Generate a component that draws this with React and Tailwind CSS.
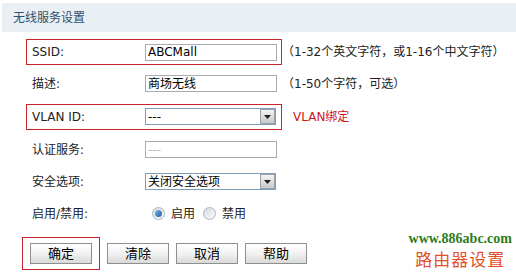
const font = { fontFamily: '"DejaVu Sans", "Noto Sans CJK SC", sans-serif' };

const Field = ({ label, boxed, children, hint, hintClass = "", height }) => (
  <div className={`flex items-center pl-[26px] ${height}`}>
    <div
      className={`flex items-center w-[256px] h-[26px] pl-[5px] border ${
        boxed ? "border-[#c8242b]" : "border-transparent"
      }`}
    >
      <span className="w-[113px] text-[12px] text-[#222]">{label}</span>
      {children}
    </div>
    {hint && <span className={`text-[12px] ${hintClass}`}>{hint}</span>}
  </div>
);

const TextBox = ({ value, disabled }) => (
  <div
    className={`w-[132px] h-[17px] border border-[#a5acb2] bg-white flex items-center pl-[2px] text-[12px] leading-none ${
      disabled ? "text-[#b8b8b8]" : "text-black"
    }`}
  >
    {value}
  </div>
);

const SelectBox = ({ value }) => (
  <div className="w-[131px] h-[17px] border border-[#7f9db9] bg-white flex items-center justify-between text-[12px] leading-none text-black">
    <span className="pl-[2px]">{value}</span>
    <span className="w-[15px] h-[15px] border border-[#9aa3ab] bg-gradient-to-b from-[#f4f4f4] to-[#c9c9c9] flex items-center justify-center">
      <svg width="7" height="4" viewBox="0 0 7 4">
        <path d="M0 0h7L3.5 4z" fill="#222" />
      </svg>
    </span>
  </div>
);

const Radio = ({ checked }) => (
  <span className="w-[13px] h-[13px] rounded-full border border-[#aab4bd] bg-gradient-to-br from-[#d8dde2] to-[#fafafa] flex items-center justify-center">
    {checked && (
      <span className="w-[7px] h-[7px] rounded-full bg-gradient-to-br from-[#7ab6e6] to-[#1a5c9c]" />
    )}
  </span>
);

const Btn = ({ children }) => (
  <button className="w-[62px] h-[21px] border border-[#8e8f8f] bg-gradient-to-b from-[#ffffff] via-[#f2f2f2] to-[#d9d9d9] text-[13px] text-black flex items-center justify-center">
    {children}
  </button>
);

export default function App() {
  return (
    <div className="w-[516px] h-[274px] bg-white relative overflow-hidden" style={font}>
      <div className="mt-[3px] ml-[2px] h-[29px] bg-[#e9eff3] flex items-center pl-[11px] text-[12px] text-[#2f4f6f]">
        无线服务设置
      </div>

      <div className="mt-[4px]">
        <Field label="SSID:" boxed height="h-[32px]" hint="（1-32个英文字符，或1-16个中文字符）" hintClass="text-[#222]">
          <TextBox value="ABCMall" />
        </Field>
        <Field label="描述:" height="h-[31px]" hint="（1-50个字符，可选）" hintClass="text-[#222]">
          <TextBox value="商场无线" />
        </Field>
        <Field label="VLAN ID:" boxed height="h-[35px]" hint="VLAN绑定" hintClass="text-[#d0141c] ml-[11px]">
          <SelectBox value="---" />
        </Field>
        <Field label="认证服务:" height="h-[31px]">
          <TextBox value="---" disabled />
        </Field>
        <Field label="安全选项:" height="h-[33px]">
          <SelectBox value="关闭安全选项" />
        </Field>
        <Field label="启用/禁用:" height="h-[31px]">
          <div className="flex items-center gap-[6px] text-[12px] text-[#222] pl-[7px]">
            <Radio checked />
            <span className="mr-[2px]">启用</span>
            <Radio />
            <span>禁用</span>
          </div>
        </Field>
      </div>

      <div className="flex items-center mt-[8px] pl-[22px] gap-[7px]">
        <div className="border border-[#c8242b] px-[7px] py-[5px]">
          <Btn>确定</Btn>
        </div>
        <Btn>清除</Btn>
        <Btn>取消</Btn>
        <Btn>帮助</Btn>
      </div>

      <div className="absolute right-[4px] top-[228px] flex flex-col items-center">
        <span
          className="text-[14px] font-bold text-[#2e7b1c]"
          style={{ fontFamily: '"Liberation Serif", serif' }}
        >
          www.886abc.com
        </span>
        <span
          className="text-[17px] text-[#e4502a] tracking-[1px] leading-[20px]"
          style={{ fontFamily: '"Noto Sans CJK SC", sans-serif' }}
        >
          路由器设置
        </span>
      </div>
    </div>
  );
}
